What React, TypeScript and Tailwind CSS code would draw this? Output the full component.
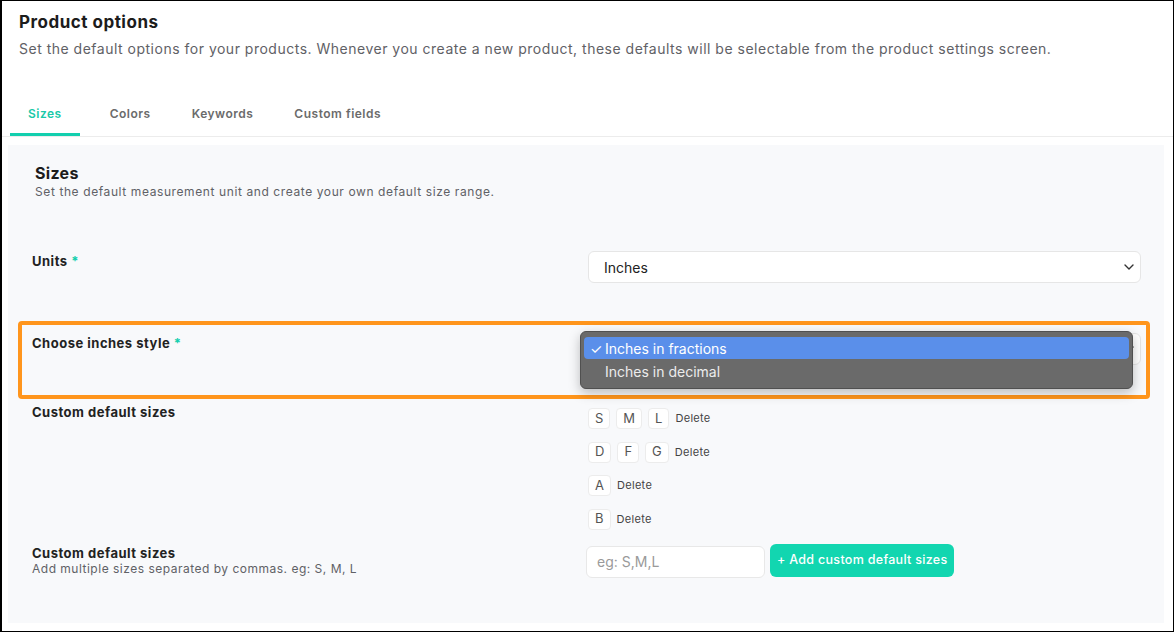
import React from "react";

const font = { fontFamily: "Inter, 'Noto Sans', sans-serif" };

function Chevron() {
  return (
    <svg width="10" height="6" viewBox="0 0 10 6" className="shrink-0">
      <path d="M1 1l4 4 4-4" fill="none" stroke="#333" strokeWidth="1.4" strokeLinecap="round" strokeLinejoin="round" />
    </svg>
  );
}

function Chip({ t }: { t: string }) {
  return (
    <span className="flex h-[21px] min-w-[21px] items-center justify-center rounded-[4px] border border-[#ececec] bg-white px-[6px] text-[13px] text-[#555]">
      {t}
    </span>
  );
}

function ChipRow({ items }: { items: string[] }) {
  return (
    <div className="flex items-center gap-[6px]">
      {items.map((i) => (
        <Chip key={i} t={i} />
      ))}
      <span className="text-[11px] tracking-[0.3px] text-[#444]">Delete</span>
    </div>
  );
}

export default function App() {
  const tabs = ["Sizes", "Colors", "Keywords", "Custom fields"];
  return (
    <div style={font} className="relative h-[632px] w-[1174px] border border-l-2 border-black bg-white">
      <div className="px-[17px] pt-[9px]">
        <h1 className="text-[17px] font-bold leading-[24px] tracking-[0.5px] text-[#1c1c1c]">Product options</h1>
        <p className="mt-[5px] text-[14px] leading-[20px] tracking-[0.5px] text-[#5f6166]">
          Set the default options for your products. Whenever you create a new product, these defaults will be selectable from the product settings screen.
        </p>
      </div>
      <div className="mt-[33px] flex border-b border-[#ececec] pl-[8px]">
        {tabs.map((t, i) => (
          <div
            key={t}
            className={
              "flex h-[44px] items-center px-[18px] text-[12px] font-semibold tracking-[0.5px] " +
              (i === 0 ? "mr-[12px] border-b-[3px] border-[#12cfae] pt-[3px] text-[#19c9a8]" : "mr-[5px] text-[#6b6b6b]")
            }
          >
            {t}
          </div>
        ))}
      </div>
      <div className="ml-[6px] mr-[9px] mt-[8px] h-[478px] bg-[#f8f9fb] pl-[24px] pr-[23px] pt-[17px]">
        <div className="pl-[3px]">
          <h2 className="text-[16px] font-bold leading-[22px] tracking-[0.3px] text-[#1c1c1c]">Sizes</h2>
          <p className="text-[12px] leading-[16px] tracking-[0.6px] text-[#5f6166]">
            Set the default measurement unit and create your own default size range.
          </p>
        </div>

        <div className="mt-[51px] grid grid-cols-[556px_1fr]">
          <div className="pt-[1px] text-[13px] font-bold leading-[18px] tracking-[0.5px] text-[#222]">
            Units <span className="text-[#12cfae]">*</span>
          </div>
          <div className="flex h-[32px] items-center justify-between rounded-[6px] border border-[#e6e6e6] bg-white pl-[15px] pr-[6px] text-[14px] text-[#222]">
            <span>Inches</span>
            <Chevron />
          </div>
        </div>

        <div className="mt-[50px] grid grid-cols-[556px_1fr]">
          <div className="pt-[1px] text-[13px] font-bold leading-[18px] tracking-[0.5px] text-[#222]">
            Choose inches style <span className="text-[#12cfae]">*</span>
          </div>
          <div className="flex h-[32px] items-center justify-end rounded-[6px] border border-[#e6e6e6] bg-white pl-[15px] pr-[6px]">
            <Chevron />
          </div>
        </div>

        <div className="mt-[38px] grid grid-cols-[556px_1fr]">
          <div className="text-[13px] font-bold leading-[18px] tracking-[0.5px] text-[#222]">Custom default sizes</div>
          <div className="mt-[5px] flex flex-col gap-[12.5px]">
            <ChipRow items={["S", "M", "L"]} />
            <ChipRow items={["D", "F", "G"]} />
            <ChipRow items={["A"]} />
            <ChipRow items={["B"]} />
          </div>
        </div>

        <div className="mt-[14px] grid grid-cols-[556px_1fr]">
          <div>
            <div className="text-[13px] font-bold leading-[18px] tracking-[0.5px] text-[#222]">Custom default sizes</div>
            <div className="text-[12px] leading-[14px] tracking-[0.5px] text-[#5f6166]">
              Add multiple sizes separated by commas. eg: S, M, L
            </div>
          </div>
          <div className="-ml-[2px] flex items-start gap-[5px]">
            <div className="mt-[2px] flex h-[32px] w-[179px] items-center rounded-[6px] border border-[#e8e8e8] bg-white px-[10px] text-[14px] text-[#9a9a9a]">
              eg: S,M,L
            </div>
            <button className="h-[33px] rounded-[6px] bg-[#12d6b0] px-[7px] text-[12.5px] font-medium tracking-[0.3px] text-white">
              + Add custom default sizes
            </button>
          </div>
        </div>
      </div>

      {/* annotation highlight */}
      <div className="pointer-events-none absolute left-[16px] top-[320px] h-[78px] w-[1132px] rounded-[4px] border-[4px] border-[#ff951c]" />

      {/* native select popup */}
      <div
        style={{ fontFamily: "Inter, Roboto, sans-serif" }}
        className="absolute left-[578px] top-[330px] h-[58px] w-[553px] rounded-[6px] border border-[#505050] bg-[#6a6a6a] px-[3px] pt-[5px] shadow-[0_4px_12px_rgba(0,0,0,0.25)]"
      >
        <div className="flex h-[22px] items-center rounded-[4px] bg-[#5a8fea] pl-[6px] text-[14px] text-white">
          <span className="w-[15px]">✓</span>
          <span>Inches in fractions</span>
        </div>
        <div className="flex h-[24px] items-center pl-[21px] text-[14px] text-[#ececec]">Inches in decimal</div>
      </div>
    </div>
  );
}
